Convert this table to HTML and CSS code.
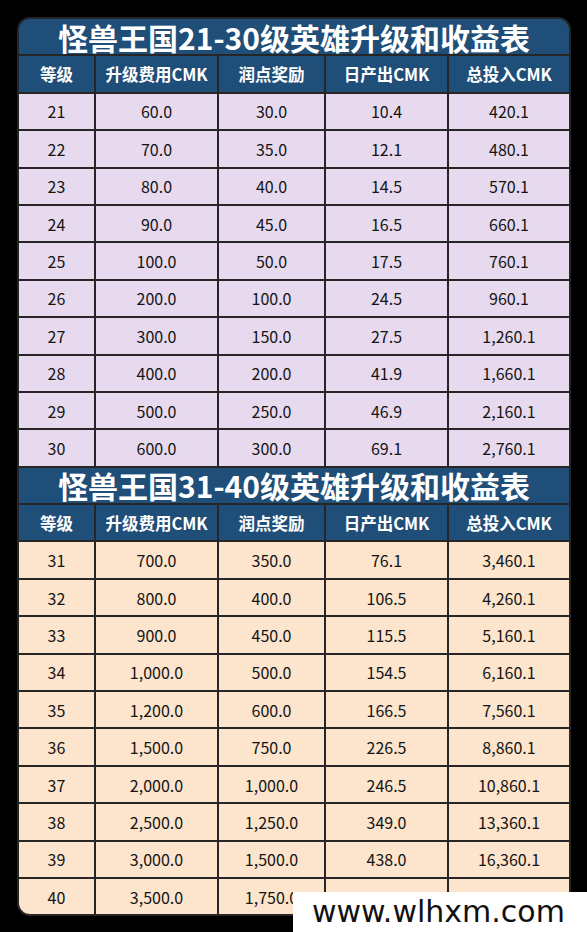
FILE: index.html
```html
<!DOCTYPE html>
<html lang="zh">
<head>
<meta charset="utf-8">
<title>怪兽王国英雄升级和收益表</title>
<link rel="stylesheet" href="styles.css">
</head>
<body>
<div class="sheet">
  <div class="title first">怪兽王国21-30级英雄升级和收益表</div>
  <div class="hd">等级</div><div class="hd">升级费用CMK</div><div class="hd">润点奖励</div><div class="hd">日产出CMK</div><div class="hd">总投入CMK</div>
  <div class="c a">21</div><div class="c a">60.0</div><div class="c a">30.0</div><div class="c a">10.4</div><div class="c a">420.1</div>
  <div class="c a">22</div><div class="c a">70.0</div><div class="c a">35.0</div><div class="c a">12.1</div><div class="c a">480.1</div>
  <div class="c a">23</div><div class="c a">80.0</div><div class="c a">40.0</div><div class="c a">14.5</div><div class="c a">570.1</div>
  <div class="c a">24</div><div class="c a">90.0</div><div class="c a">45.0</div><div class="c a">16.5</div><div class="c a">660.1</div>
  <div class="c a">25</div><div class="c a">100.0</div><div class="c a">50.0</div><div class="c a">17.5</div><div class="c a">760.1</div>
  <div class="c a">26</div><div class="c a">200.0</div><div class="c a">100.0</div><div class="c a">24.5</div><div class="c a">960.1</div>
  <div class="c a">27</div><div class="c a">300.0</div><div class="c a">150.0</div><div class="c a">27.5</div><div class="c a">1,260.1</div>
  <div class="c a">28</div><div class="c a">400.0</div><div class="c a">200.0</div><div class="c a">41.9</div><div class="c a">1,660.1</div>
  <div class="c a">29</div><div class="c a">500.0</div><div class="c a">250.0</div><div class="c a">46.9</div><div class="c a">2,160.1</div>
  <div class="c a">30</div><div class="c a">600.0</div><div class="c a">300.0</div><div class="c a">69.1</div><div class="c a">2,760.1</div>
  <div class="title">怪兽王国31-40级英雄升级和收益表</div>
  <div class="hd">等级</div><div class="hd">升级费用CMK</div><div class="hd">润点奖励</div><div class="hd">日产出CMK</div><div class="hd">总投入CMK</div>
  <div class="c b">31</div><div class="c b">700.0</div><div class="c b">350.0</div><div class="c b">76.1</div><div class="c b">3,460.1</div>
  <div class="c b">32</div><div class="c b">800.0</div><div class="c b">400.0</div><div class="c b">106.5</div><div class="c b">4,260.1</div>
  <div class="c b">33</div><div class="c b">900.0</div><div class="c b">450.0</div><div class="c b">115.5</div><div class="c b">5,160.1</div>
  <div class="c b">34</div><div class="c b">1,000.0</div><div class="c b">500.0</div><div class="c b">154.5</div><div class="c b">6,160.1</div>
  <div class="c b">35</div><div class="c b">1,200.0</div><div class="c b">600.0</div><div class="c b">166.5</div><div class="c b">7,560.1</div>
  <div class="c b">36</div><div class="c b">1,500.0</div><div class="c b">750.0</div><div class="c b">226.5</div><div class="c b">8,860.1</div>
  <div class="c b">37</div><div class="c b">2,000.0</div><div class="c b">1,000.0</div><div class="c b">246.5</div><div class="c b">10,860.1</div>
  <div class="c b">38</div><div class="c b">2,500.0</div><div class="c b">1,250.0</div><div class="c b">349.0</div><div class="c b">13,360.1</div>
  <div class="c b">39</div><div class="c b">3,000.0</div><div class="c b">1,500.0</div><div class="c b">438.0</div><div class="c b">16,360.1</div>
  <div class="c b bl">40</div><div class="c b">3,500.0</div><div class="c b">1,750.0</div><div class="c b">488.0</div><div class="c b br">19,360.1</div>
</div>
<div class="watermark">www.wlhxm.com</div>
</body>
</html>
```

FILE: styles.css
```css
html, body {
  margin: 0;
  padding: 0;
  background: #000;
  width: 587px;
  height: 932px;
  overflow: hidden;
}
body {
  position: relative;
  padding-top: 17px;
  box-sizing: border-box;
  font-family: "Noto Sans CJK SC", "Noto Sans", sans-serif;
}
.sheet {
  margin-left: 17px;
  width: 554px;
  box-sizing: border-box;
  background: #262626;
  border-radius: 13px;
  padding: 2px;
  display: grid;
  grid-template-columns: 75px 121px 105px 121px 120px;
  grid-auto-rows: 35.4px;
  gap: 2px;
}
.title {
  grid-column: 1 / -1;
  background: #1f4e79;
  color: #fff;
  font-weight: 700;
  font-size: 30px;
  display: flex;
  align-items: center;
  justify-content: center;
  line-height: 1;
}
.title.first {
  border-radius: 11px 11px 0 0;
}
.hd {
  background: #1f4e79;
  color: #fff;
  font-weight: 700;
  font-size: 16.5px;
  display: flex;
  align-items: center;
  justify-content: center;
  line-height: 1;
}
.c {
  display: flex;
  align-items: center;
  justify-content: center;
  font-size: 16px;
  color: #141414;
  line-height: 1;
}
.a { background: #e7daef; }
.b { background: #fce4cd; }
.bl { border-bottom-left-radius: 11px; }
.br { border-bottom-right-radius: 11px; }
.watermark {
  position: absolute;
  left: 293px;
  top: 892px;
  right: 0;
  bottom: 0;
  background: #fff;
  color: #111;
  font-family: "DejaVu Sans", sans-serif;
  font-size: 30px;
  line-height: 40px;
  padding-left: 19px;
  box-sizing: border-box;
}
```
